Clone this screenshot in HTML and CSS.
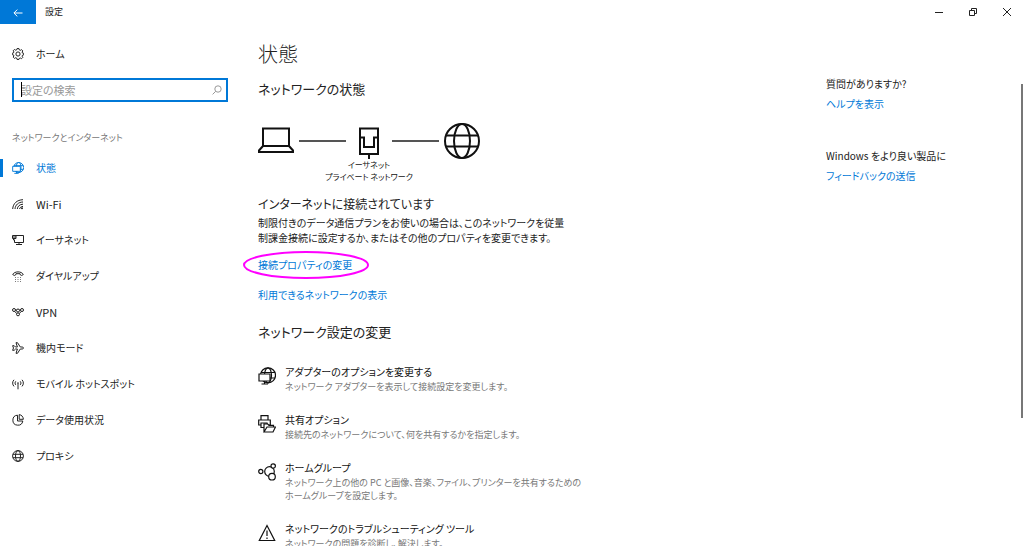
FILE: index.html
```
<!DOCTYPE html>
<html lang="ja">
<head>
    <meta charset="UTF-8">
    <meta name="viewport" content="width=device-width, initial-scale=1.0">
    <title>設定</title>
    <link rel="stylesheet" href="styles.css">
</head>
<body>
    <header class="titlebar">
        <button class="back" aria-label="戻る">
            <svg width="10" height="8" viewBox="0 0 10 8"><path d="M9.5 4H1M4.3 .6L.9 4l3.4 3.4"/></svg>
        </button>
        <span class="window-title">設定</span>
        <div class="window-buttons">
            <button aria-label="最小化"><svg width="10" height="10" viewBox="0 0 10 10"><path d="M1 5.5h8"/></svg></button>
            <button aria-label="元に戻す"><svg width="10" height="10" viewBox="0 0 10 10"><path d="M1.5 3.5h5v5h-5zM3.5 3.5v-2h5v5h-2"/></svg></button>
            <button aria-label="閉じる"><svg width="10" height="10" viewBox="0 0 10 10"><path d="M1 1l8 8M9 1L1 9"/></svg></button>
        </div>
    </header>

    <div class="page">
        <aside class="sidebar">
            <a class="nav-item" href="#">
                <svg class="icon" viewBox="0 0 12 12"><path d="M5 .6h2l.3 1.3 1 .5 1.2-.8 1.3 1.3-.7 1.2.4 1 1.2.2v1.6l-1.2.3-.4 1 .7 1.2-1.3 1.3-1.2-.7-1 .4L7 11.400H5l-.3-1.300-1-.4-1.200.7-1.300-1.300.7-1.200-.4-1L.3 6.700V5.200l1.200-.3.4-1-.7-1.200 1.300-1.200 1.200.7 1-.4z"/><circle cx="6" cy="6" r="2.100"/></svg>
                ホーム
            </a>
            <div class="search">
                <input type="text" placeholder="設定の検索" aria-label="設定の検索">
                <span class="caret"></span>
                <svg width="10" height="10" viewBox="0 0 10 10"><circle cx="6" cy="4" r="3.200"/><path d="M3.700 6.300L.6 9.400"/></svg>
            </div>
            <p class="group">ネットワークとインターネット</p>
            <nav>
                <a class="nav-item active" href="#">
                    <svg class="icon" viewBox="0 0 18 18"><g class="thick"><circle cx="10" cy="8.300" r="7.500"/><ellipse cx="10" cy="8.300" rx="3.500" ry="7.500"/><path d="M3 5.500h14M3 11h14"/><path class="screen" d="M1 6.500h11.500v7.500H1z"/><path d="M6.700 14v3M3.500 17H10"/></g></svg>
                    状態
                </a>
                <a class="nav-item" href="#">
                    <svg class="icon" viewBox="0 0 12 12"><path d="M.7 11C1 5.500 5 1.900 11 1.700M3 11c.3-4 3.300-6.900 8-7M5.300 11c.2-2.600 2.300-4.700 5.700-4.800M7.600 11c.2-1.400 1.400-2.500 3.400-2.600"/><circle class="dot" cx="10" cy="10.300" r="1"/></svg>
                    <span class="latin">Wi-Fi</span>
                </a>
                <a class="nav-item" href="#">
                    <svg class="icon" viewBox="0 0 12 12"><path d="M4 1.500h7.500v7H2.500V6M7 8.500v2M4 10.500h6M.5 1.500H4v3H.5zM.5 3H4M1.500 4.500V6h1.500"/></svg>
                    イーサネット
                </a>
                <a class="nav-item" href="#">
                    <svg class="icon" viewBox="0 0 12 12"><path d="M.7 4.500C2.500 1 9.500 1 11.300 4.500L9.600 5.500 8 4.500V3.700H4v.8l-1.600 1z"/><path class="dots" d="M3 7.500h1M5.500 7.500h1M8 7.500h1M3 9.500h1M5.500 9.500h1M8 9.500h1M3 11.500h1M5.500 11.500h1M8 11.500h1"/></svg>
                    ダイヤルアップ
                </a>
                <a class="nav-item" href="#">
                    <svg class="icon" viewBox="0 0 12 12"><circle cx="2" cy="4" r="1.500"/><circle cx="6" cy="4.500" r="1.500"/><circle cx="10" cy="4" r="1.500"/><circle cx="6" cy="8.300" r="1.500"/><path d="M3.400 4h1.200M7.400 4h1.200M2.700 5.400L4.700 7.500M9.300 5.400L7.300 7.500"/></svg>
                    <span class="latin">VPN</span>
                </a>
                <a class="nav-item" href="#">
                    <svg class="icon" viewBox="0 0 12 12"><path d="M.6 3.700h1.600L3.500 5h1.900L4 .7h1.500L8.300 5h2c1.600.2 1.600 1.800 0 2h-2l-2.800 4.300H4L5.400 7H3.500L2.200 8.300H.6L1.500 6z"/></svg>
                    機内モード
                </a>
                <a class="nav-item" href="#">
                    <svg class="icon" viewBox="0 0 12 12"><path d="M2 1.800C.2 3.600.2 6.600 2 8.400M3.800 3.300c-1 1-1 2.600 0 3.600M10 1.800c1.800 1.800 1.800 4.800 0 6.600M8.200 3.300c1 1 1 2.600 0 3.600M6 5.500v5.800"/><circle class="dot" cx="6" cy="5.100" r=".8"/></svg>
                    モバイル ホットスポット
                </a>
                <a class="nav-item" href="#">
                    <svg class="icon" viewBox="0 0 12 12"><path d="M5.500 1.200a5 5 0 1 0 5.300 5.800H5.500z"/><path d="M7.200.6v4.700h4.200C11.200 2.700 9.600.9 7.200.6z"/></svg>
                    データ使用状況
                </a>
                <a class="nav-item" href="#">
                    <svg class="icon" viewBox="0 0 12 12"><circle cx="6" cy="6" r="5.400"/><ellipse cx="6" cy="6" rx="2.500" ry="5.400"/><path d="M1 4.300h10M1 7.700h10"/></svg>
                    プロキシ
                </a>
            </nav>
        </aside>

        <main class="content">
            <h1>状態</h1>
            <h2>ネットワークの状態</h2>
            <div class="diagram">
                <svg width="36" height="36" viewBox="0 0 36 36"><path d="M5 5.500h26V23H5zM5 23l-4 4.500V29h34v-1.500L31 23"/></svg>
                <span class="line"></span>
                <div class="ethernet">
                    <svg width="20" height="36" viewBox="0 0 20 36"><path d="M1 5.500h18V31H1zM1 14.500h4V24h10v-9.500h4M10 31v5"/></svg>
                    <p class="network-name">イーサネット<br>プライベート ネットワーク</p>
                </div>
                <span class="line"></span>
                <svg width="36" height="36" viewBox="0 0 36 36"><circle cx="18" cy="18" r="17"/><ellipse cx="18" cy="18" rx="8" ry="17"/><path d="M2 12.500h32M2 23.500h32"/></svg>
            </div>

            <h3>インターネットに接続されています</h3>
            <p class="status-text">制限付きのデータ通信プランをお使いの場合は、このネットワークを従量<br>制課金接続に設定するか、またはその他のプロパティを変更できます。</p>
            <p class="link-row">
                <a class="marked" href="#">接続プロパティの変更<svg class="marker" viewBox="0 0 126 30"><ellipse cx="63" cy="15" rx="62" ry="13"/></svg></a>
            </p>
            <p class="link-row"><a href="#">利用できるネットワークの表示</a></p>

            <h2 class="change">ネットワーク設定の変更</h2>
            <a class="option" href="#">
                <svg width="18" height="18" viewBox="0 0 18 18"><circle cx="10" cy="8.300" r="7.500"/><ellipse cx="10" cy="8.300" rx="3.500" ry="7.500"/><path d="M3 5.500h14M3 11h14"/><path class="screen" d="M1 7h11v7H1z"/><path d="M6.500 14v3M3.500 17H10"/></svg>
                <span class="option-text"><b>アダプターのオプションを変更する</b><small>ネットワーク アダプターを表示して接続設定を変更します。</small></span>
            </a>
            <a class="option" href="#">
                <svg width="18" height="18" viewBox="0 0 18 18"><path d="M3 5V.7h7V5M.7 5h11.600v5H.7z"/><path class="screen" d="M3 8h6v4.500H3z"/><path class="screen" d="M6 17V8.800h3.500l1.500 1.500h4.500V12M6 17l3-5h8.500L15 17z"/></svg>
                <span class="option-text"><b>共有オプション</b><small>接続先のネットワークについて、何を共有するかを指定します。</small></span>
            </a>
            <a class="option" href="#">
                <svg width="18" height="18" viewBox="0 0 18 18"><circle cx="11.500" cy="8.500" r="4.800"/><circle cx="2.800" cy="8.500" r="2.100"/><circle class="screen" cx="15.200" cy="3" r="2.200"/><circle class="screen" cx="14" cy="13.700" r="3.300"/></svg>
                <span class="option-text"><b>ホームグループ</b><small>ネットワーク上の他の PC と画像、音楽、ファイル、プリンターを共有するための<br>ホームグループを設定します。</small></span>
            </a>
            <a class="option" href="#">
                <svg width="18" height="18" viewBox="0 0 18 18"><path d="M9 1.500L16.700 16.500H1.300zM9 6.500v5.500M9 13.500V15"/></svg>
                <span class="option-text"><b>ネットワークのトラブルシューティング ツール</b><small>ネットワークの問題を診断し、解決します。</small></span>
            </a>
        </main>

        <aside class="support">
            <p>質問がありますか?</p>
            <a href="#">ヘルプを表示</a>
            <p>Windows をより良い製品に</p>
            <a href="#">フィードバックの送信</a>
        </aside>
        <div class="scrollbar"></div>
    </div>
</body>
</html>
```
FILE: styles.css
```
* {
    margin: 0;
    padding: 0;
    box-sizing: border-box;
}

body {
    font-family: "Noto Sans CJK JP", sans-serif;
    font-size: 10px;
    font-feature-settings: "palt";
    line-height: 16px;
    color: #222;
    background: #fff;
    height: 100vh;
    overflow: hidden;
    display: flex;
    flex-direction: column;
}

a {
    color: #0078d7;
    text-decoration: none;
}

button {
    border: none;
    background: none;
}

svg {
    fill: none;
    stroke: currentColor;
    flex: none;
}

/* title bar */
.titlebar {
    display: flex;
    align-items: center;
    height: 24px;
    flex: none;
}

.back {
    width: 36px;
    height: 24px;
    background: #0078d7;
    color: #fff;
}

.window-title {
    margin-left: 9px;
    font-size: 9px;
}

.window-buttons {
    display: flex;
    margin-left: auto;
}

.window-buttons button {
    width: 34px;
    height: 24px;
    color: #222;
}

.page {
    position: relative;
    flex: 1;
    min-height: 0;
    display: grid;
    grid-template-columns: 240px 1fr 198px;
}

/* sidebar */
.sidebar {
    padding-top: 12px;
}

.nav-item {
    display: flex;
    align-items: center;
    gap: 12px;
    height: 36px;
    padding-left: 12px;
    color: #222;
}

.icon {
    width: 12px;
    height: 12px;
}

.latin {
    font-size: 11px;
}

.dot {
    fill: currentColor;
    stroke: none;
}

.dots {
    opacity: .6;
}

.screen {
    fill: #fff;
}

.active {
    color: #0078d7;
    padding-left: 9px;
    border-left: 3px solid #0078d7;
    height: 18px;
    margin: 9px 0;
}

.search {
    position: relative;
    margin: 6px 12px 28px;
}

.search input {
    display: block;
    width: 100%;
    height: 24px;
    padding: 0 24px 0 7px;
    border: 2px solid #0078d7;
    font: inherit;
    font-size: 11px;
    outline: none;
}

.search input::placeholder {
    color: #999;
}

.search svg {
    position: absolute;
    right: 6px;
    top: 7px;
    color: #999;
}

.caret {
    position: absolute;
    left: 9px;
    top: 4px;
    width: 1px;
    height: 15px;
    background: #000;
}

.group {
    padding-left: 12px;
    margin-bottom: 13px;
    font-size: 9px;
    color: #777;
}

/* main column */
.content {
    padding: 16px 0 0 18px;
}

h1 {
    font-size: 20px;
    font-weight: 300;
    line-height: 28px;
}

h2 {
    font-size: 13px;
    font-weight: 400;
    line-height: 20px;
    margin-top: 11px;
}

.diagram {
    display: flex;
    gap: 5px;
    height: 72px;
    margin-top: 24px;
    color: #111;
}

.diagram svg {
    stroke-width: 2;
}

.line {
    width: 47px;
    height: 2px;
    margin-top: 17px;
    background: #555;
}

.ethernet {
    display: flex;
    flex-direction: column;
    align-items: center;
    width: 36px;
}

.network-name {
    font-size: 8px;
    line-height: 12px;
    text-align: center;
    white-space: nowrap;
}

h3 {
    font-size: 12px;
    font-weight: 400;
    line-height: 18px;
}

.status-text {
    line-height: 15px;
    margin-top: 2px;
    white-space: nowrap;
}

.link-row {
    margin-top: 12px;
    height: 18px;
}

.marked {
    position: relative;
}

/* hand-drawn highlight around the link */
.marker {
    position: absolute;
    left: -15px;
    top: -7px;
    width: 126px;
    height: 30px;
    color: #f0f;
    stroke-width: 2;
    pointer-events: none;
}

.change {
    margin: 17px 0 21px;
}

.option {
    display: flex;
    gap: 9px;
    margin-bottom: 18px;
    color: #111;
}

.option svg {
    margin-top: 4px;
    stroke-width: 1.2;
}

.thick {
    stroke-width: 1.4;
}

.option b,
.option small {
    display: block;
    font-weight: 400;
    white-space: nowrap;
}

.option b {
    font-size: 10px;
    line-height: 17px;
}

.option small {
    font-size: 9px;
    line-height: 13px;
    color: #777;
}

.support {
    padding-top: 51px;
}

.support p {
    line-height: 18px;
}

.support a {
    display: block;
    line-height: 22px;
    margin-bottom: 32px;
}

.scrollbar {
    position: absolute;
    right: 1px;
    top: 60px;
    width: 2px;
    height: 64%;
    background: #777;
}
```
